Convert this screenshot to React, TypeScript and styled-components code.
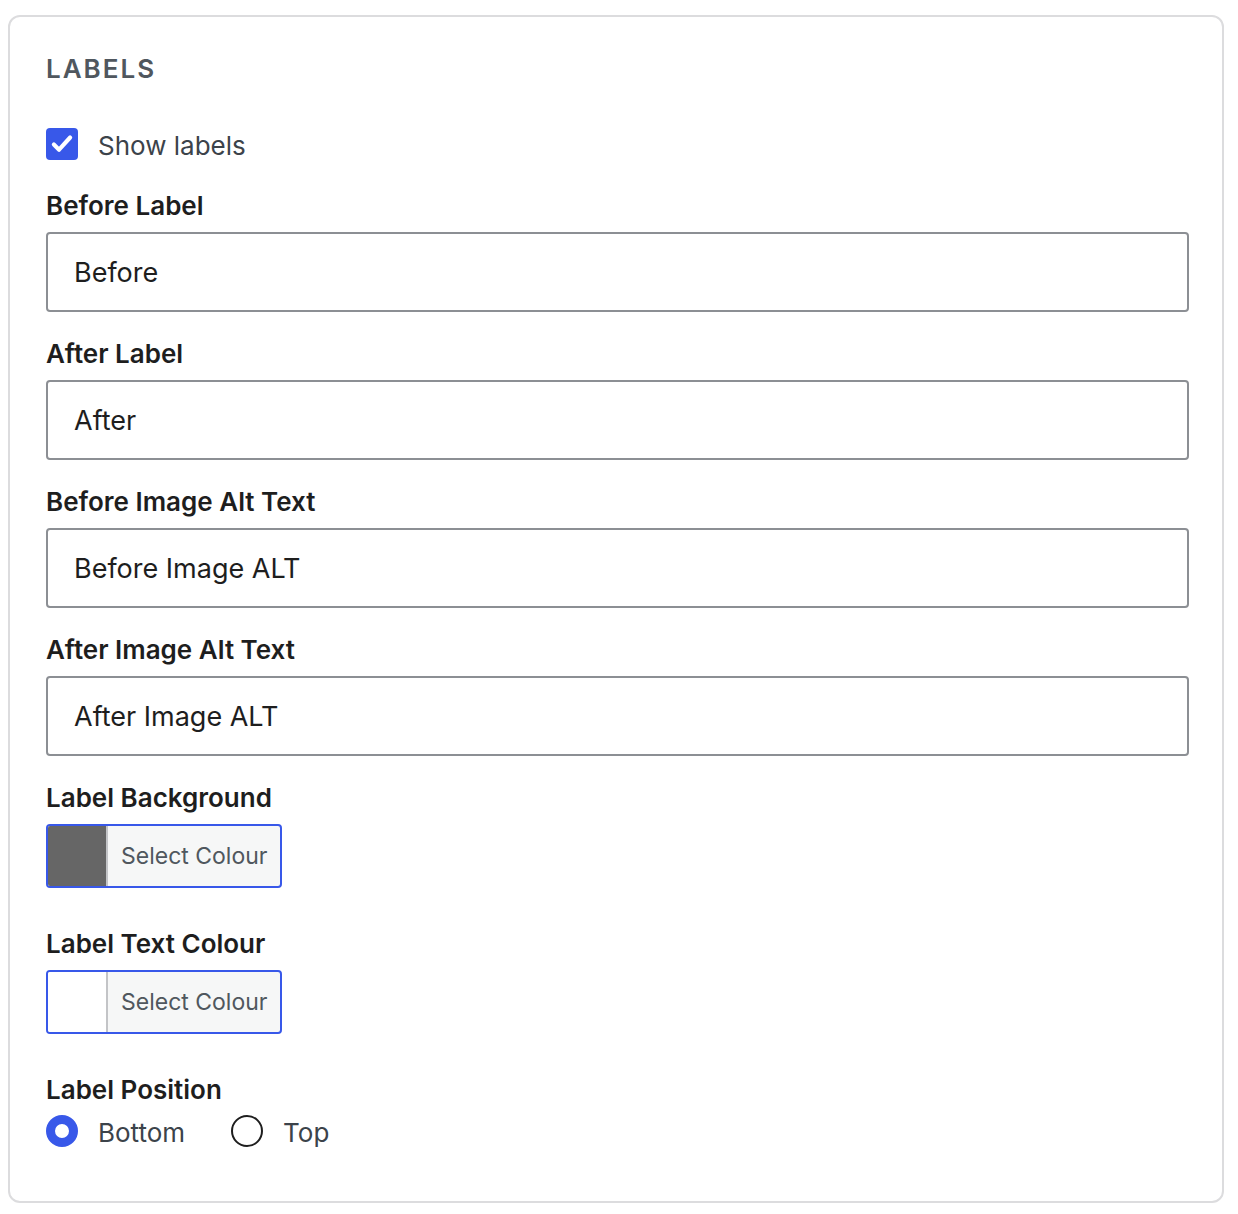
import React from 'react';
import styled, { createGlobalStyle } from 'styled-components';

const GlobalStyle = createGlobalStyle`
  * { box-sizing: border-box; }
  body {
    margin: 0;
    background: #fff;
    font-family: Inter, "Liberation Sans", sans-serif;
  }
`;

interface FieldProps {
  label: string;
  value: string;
}

function TextField({ label, value }: FieldProps): React.ReactElement {
  return (
    <Field>
      <FieldLabel>{label}</FieldLabel>
      <Input readOnly value={value} />
    </Field>
  );
}

export default function App(): React.ReactElement {
  return (
    <>
      <GlobalStyle />
      <Page>
        <Panel>
          <Heading>LABELS</Heading>
          <CheckRow>
            <Checkbox>
              <svg width="26" height="26" viewBox="0 0 24 24" fill="none">
                <path d="M4.5 12.5l4.8 4.8L19.5 6" stroke="#fff" strokeWidth="3.8" strokeLinecap="round" strokeLinejoin="round" />
              </svg>
            </Checkbox>
            <OptionText>Show labels</OptionText>
          </CheckRow>
          <TextField label="Before Label" value="Before" />
          <TextField label="After Label" value="After" />
          <TextField label="Before Image Alt Text" value="Before Image ALT" />
          <TextField label="After Image Alt Text" value="After Image ALT" />
          <ColourField>
            <FieldLabel>Label Background</FieldLabel>
            <ColourButton>
              <Swatch $colour="#666666" />
              <ColourText>Select Colour</ColourText>
            </ColourButton>
          </ColourField>
          <ColourField>
            <FieldLabel>Label Text Colour</FieldLabel>
            <ColourButton>
              <Swatch $colour="#ffffff" />
              <ColourText>Select Colour</ColourText>
            </ColourButton>
          </ColourField>
          <LastField>
            <FieldLabel>Label Position</FieldLabel>
            <RadioGroup>
              <RadioOption>
                <Radio $checked />
                <OptionText>Bottom</OptionText>
              </RadioOption>
              <RadioOption>
                <Radio />
                <OptionText>Top</OptionText>
              </RadioOption>
            </RadioGroup>
          </LastField>
        </Panel>
      </Page>
    </>
  );
}

const Page = styled.div`
  padding: 15px 14px 13px 8px;
`;

const Panel = styled.div`
  border: 2px solid #dcdcde;
  border-radius: 12px;
  padding: 36px 33px 52px 36px;
  display: flex;
  flex-direction: column;
`;

const Heading = styled.h2`
  margin: 0 0 40px;
  font-size: 26px;
  font-weight: 600;
  letter-spacing: 2px;
  color: #50575e;
  line-height: 32px;
`;

const CheckRow = styled.label`
  display: flex;
  align-items: center;
  gap: 20px;
  margin-bottom: 28px;
`;

const Checkbox = styled.span`
  width: 32px;
  height: 32px;
  border-radius: 4px;
  background: #3858e9;
  display: flex;
  align-items: center;
  justify-content: center;
`;

const OptionText = styled.span`
  font-size: 26px;
  color: #3c434a;
  line-height: 32px;
  padding-top: 5px;
`;

const Field = styled.div`
  display: flex;
  flex-direction: column;
  margin-bottom: 26px;
`;

const ColourField = styled(Field)`
  margin-bottom: 40px;
`;

const LastField = styled(Field)`
  margin-bottom: 0;
`;

const FieldLabel = styled.label`
  font-size: 26px;
  font-weight: 600;
  color: #1e1e1e;
  line-height: 32px;
  margin-bottom: 10px;
`;

const Input = styled.input`
  width: 100%;
  height: 80px;
  border: 2px solid #8c8f94;
  border-radius: 4px;
  padding: 0 26px;
  font-family: inherit;
  font-size: 27px;
  color: #1e1e1e;
  background: #fff;
  outline: none;
`;

const ColourButton = styled.button`
  align-self: flex-start;
  display: flex;
  height: 64px;
  padding: 0;
  border: 2px solid #3858e9;
  border-radius: 4px;
  overflow: hidden;
  background: #f6f7f7;
  font-family: inherit;
  cursor: pointer;
`;

const Swatch = styled.span<{ $colour: string }>`
  width: 60px;
  height: 100%;
  background: ${(p) => p.$colour};
  border-right: 2px solid #c3c4c7;
`;

const ColourText = styled.span`
  display: flex;
  align-items: center;
  padding: 0 12px 0 13px;
  font-size: 23px;
  color: #50575e;
`;

const RadioGroup = styled.div`
  display: flex;
  gap: 46px;
  margin-top: -4px;
`;

const RadioOption = styled.label`
  display: flex;
  align-items: center;
  gap: 20px;
`;

const Radio = styled.span<{ $checked?: boolean }>`
  width: 32px;
  height: 32px;
  border-radius: 50%;
  border: ${(p) => (p.$checked ? '9px solid #3858e9' : '2px solid #1e1e1e')};
  background: #fff;
`;
